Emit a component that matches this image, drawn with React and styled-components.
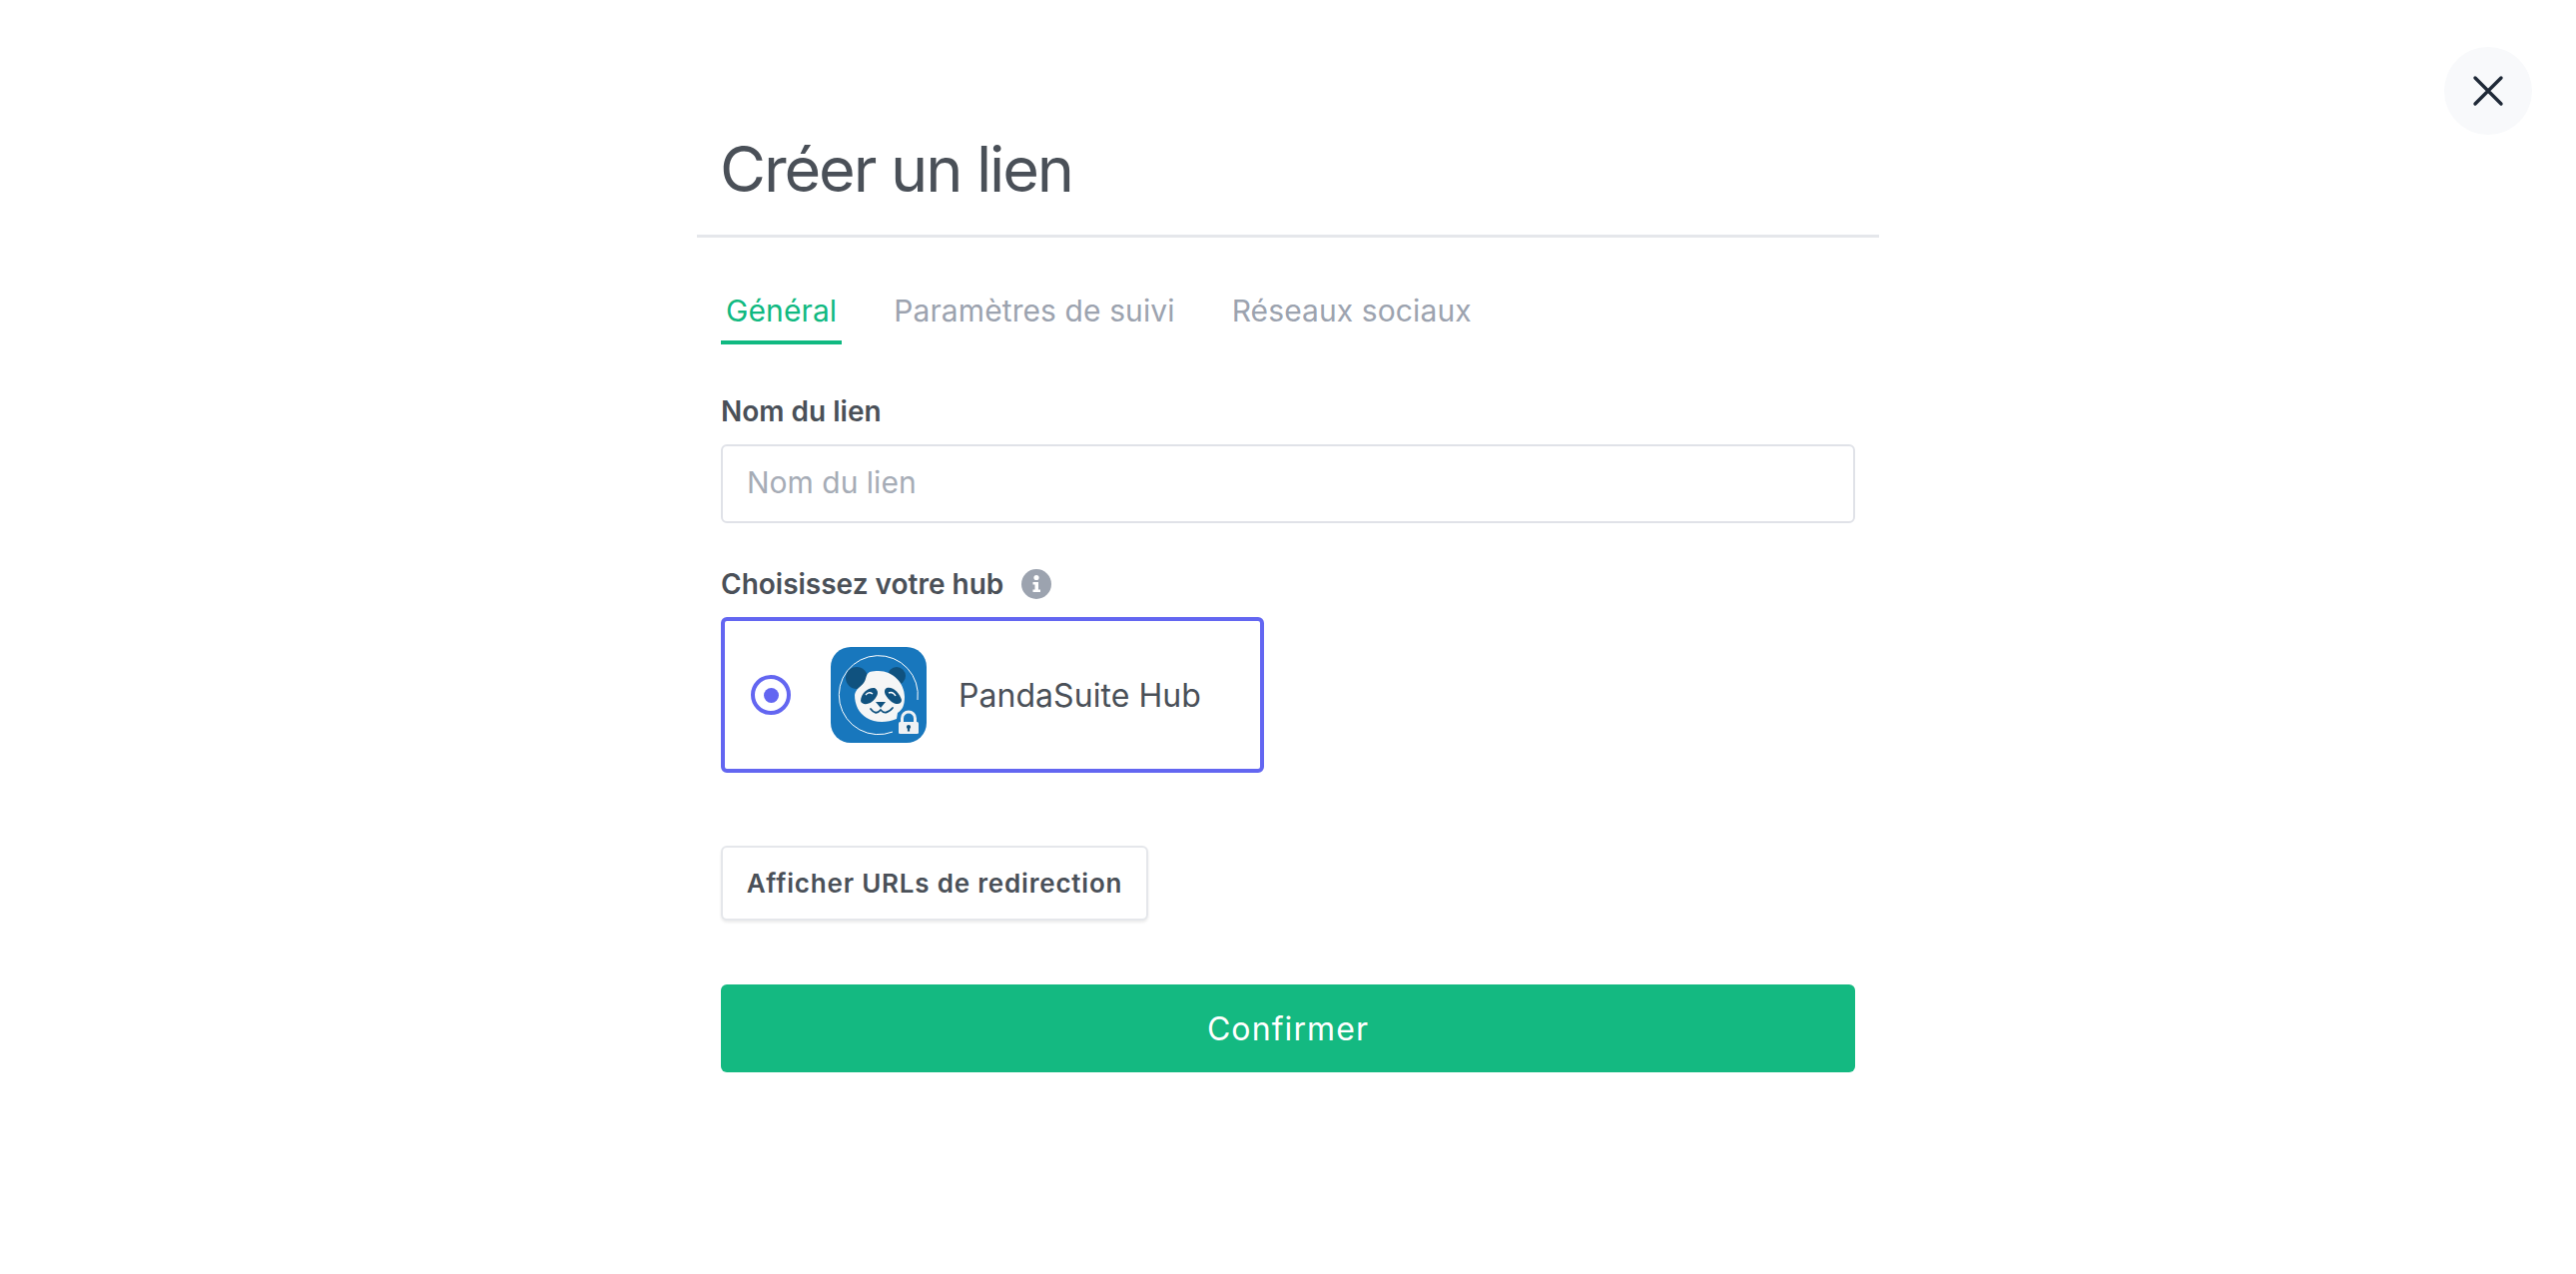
import React from 'react';
import styled, { createGlobalStyle } from 'styled-components';

const GlobalStyle = createGlobalStyle`
  html, body {
    margin: 0;
    padding: 0;
    background: #fff;
    font-family: Inter, "Liberation Sans", sans-serif;
  }
`;

const Page = styled.div`
  position: relative;
  height: 1276px;
  display: flex;
  flex-direction: column;
  align-items: center;
`;

const CloseButton = styled.button`
  position: absolute;
  top: 47px;
  right: 44px;
  width: 88px;
  height: 88px;
  padding: 0;
  border: 0;
  border-radius: 50%;
  background: #f8f9fb;
  display: flex;
  align-items: center;
  justify-content: center;
`;

const Modal = styled.div`
  width: 1184px;
  padding-top: 130px;
`;

const Title = styled.h1`
  margin: 0;
  padding: 0 0 25px 23px;
  height: 80px;
  font-size: 63px;
  line-height: 78px;
  font-weight: 400;
  letter-spacing: -2.1px;
  color: #4a5058;
  border-bottom: 3px solid #e5e7eb;
`;

const Body = styled.div`
  padding: 0 24px;
`;

const Tabs = styled.div`
  display: flex;
  gap: 47px;
  margin-top: 51px;
`;

const Tab = styled.div`
  padding: 0 5px 10px;
  height: 42px;
  font-size: 30px;
  line-height: 45px;
  letter-spacing: 0.1px;
  color: ${p => (p.$active ? '#10b981' : '#9ca3af')};
  border-bottom: 4px solid ${p => (p.$active ? '#10b981' : 'transparent')};
`;

const Label = styled.div`
  display: flex;
  align-items: center;
  gap: 18px;
  margin-top: ${p => p.$top}px;
  height: 38px;
  padding-bottom: 2px;
  font-size: 28px;
  font-weight: 600;
  color: #4a5058;
`;

const Input = styled.input`
  display: block;
  box-sizing: border-box;
  width: 100%;
  height: 79px;
  margin-top: 12px;
  padding: 0 24px 3px;
  border: 2px solid #e0e2e8;
  border-radius: 6px;
  font: 400 30px Inter, sans-serif;
  color: #4a5058;
  outline: none;
  &::placeholder {
    color: #a6acb6;
    opacity: 1;
  }
`;

const HubCard = styled.div`
  box-sizing: border-box;
  width: 544px;
  height: 156px;
  margin-top: 12px;
  padding: 0 26px;
  display: flex;
  align-items: center;
  border: 4px solid #6366f1;
  border-radius: 6px;
`;

const Radio = styled.span`
  box-sizing: border-box;
  width: 40px;
  height: 40px;
  border: 4px solid #6366f1;
  border-radius: 50%;
  display: flex;
  align-items: center;
  justify-content: center;
  &::after {
    content: '';
    width: 15px;
    height: 15px;
    border-radius: 50%;
    background: #6366f1;
  }
`;

const HubName = styled.span`
  margin-left: 32px;
  font-size: 32px;
  letter-spacing: 0.05px;
  color: #4a5058;
`;

const LogoWrap = styled.span`
  display: flex;
  margin-left: 40px;
`;

const SecondaryButton = styled.button`
  display: block;
  box-sizing: border-box;
  height: 75px;
  width: 428px;
  margin-top: 73px;
  padding: 0;
  background: #fff;
  border: 2px solid #e5e7eb;
  border-radius: 6px;
  box-shadow: 0 2px 3px rgba(0, 0, 0, 0.08);
  font: 600 26px Inter, sans-serif;
  letter-spacing: 0.8px;
  color: #4a5058;
`;

const PrimaryButton = styled.button`
  display: block;
  width: 100%;
  height: 88px;
  margin-top: 64px;
  border: 0;
  border-radius: 6px;
  background: #14b981;
  color: #fff;
  font: 400 32px Inter, sans-serif;
  letter-spacing: 1.1px;
`;

function HubLogo() {
  return (
    <svg width="96" height="96" viewBox="0 0 96 96">
      <rect width="96" height="96" rx="20" fill="#1877bd" />
      <path d="M62 85A39.5 39.5 0 1 1 87 53" fill="none" stroke="#fff" strokeWidth="1" />
      <circle cx="26" cy="31" r="11" fill="#10527f" />
      <circle cx="66" cy="29" r="9" fill="#10527f" />
      <path d="M24 48C25 42 30 40 33 36C36 32 35 27 39 25C42 24 45 24 48 24C62 24 74 36 74 50C74 58 72 63 67 66L66 72C56 76 44 76 36 71C28 66 24 58 24 48Z" fill="#f5f6f6" />
      <path d="M44 41C38 40 30 46 30 54C31 58 37 58 41 55C46 51 50 45 44 41Z" fill="#10527f" />
      <path d="M56 41C62 39 69 46 71 53C71 58 65 58 61 55C56 51 51 44 56 41Z" fill="#10527f" />
      <path d="M35 48Q38 44 42 47M58 46Q62 44 65 49" fill="none" stroke="#fff" strokeWidth="1.4" />
      <path d="M45 55H55L50 61Z" fill="#10527f" />
      <path d="M40 62Q45 69 50 63Q55 69 62 61" fill="none" stroke="#10527f" strokeWidth="1.8" strokeLinecap="round" />
      <path d="M71.5 75V71.5A6 6 0 0 1 84.5 71.5V75" fill="none" stroke="#eef1f4" strokeWidth="3" />
      <rect x="68" y="75" width="20" height="12" rx="1.5" fill="#eef1f4" />
      <circle cx="78" cy="80" r="2.1" fill="#10527f" />
      <rect x="76.9" y="80" width="2.2" height="4.5" fill="#10527f" />
    </svg>
  );
}

export default function App() {
  return (
    <>
      <GlobalStyle />
      <Page>
        <CloseButton aria-label="Fermer">
          <svg width="40" height="40" viewBox="0 0 40 40">
            <path d="M7 7L33 33M33 7L7 33" stroke="#1f2937" strokeWidth="3.4" strokeLinecap="round" />
          </svg>
        </CloseButton>
        <Modal>
          <Title>Créer un lien</Title>
          <Body>
            <Tabs>
              <Tab $active>Général</Tab>
              <Tab>Paramètres de suivi</Tab>
              <Tab>Réseaux sociaux</Tab>
            </Tabs>
            <Label $top={48}>Nom du lien</Label>
            <Input placeholder="Nom du lien" />
            <Label $top={42}>
              Choisissez votre hub
              <svg width="30" height="30" viewBox="0 0 30 30">
                <circle cx="15" cy="15" r="15" fill="#9ca3af" />
                <circle cx="15" cy="8.5" r="2.6" fill="#fff" />
                <path d="M11.5 13H17V20.5H19V23H11.5V20.5H13.5V15.5H11.5Z" fill="#fff" />
              </svg>
            </Label>
            <HubCard>
              <Radio />
              <LogoWrap>
                <HubLogo />
              </LogoWrap>
              <HubName>PandaSuite Hub</HubName>
            </HubCard>
            <SecondaryButton>Afficher URLs de redirection</SecondaryButton>
            <PrimaryButton>Confirmer</PrimaryButton>
          </Body>
        </Modal>
      </Page>
    </>
  );
}
